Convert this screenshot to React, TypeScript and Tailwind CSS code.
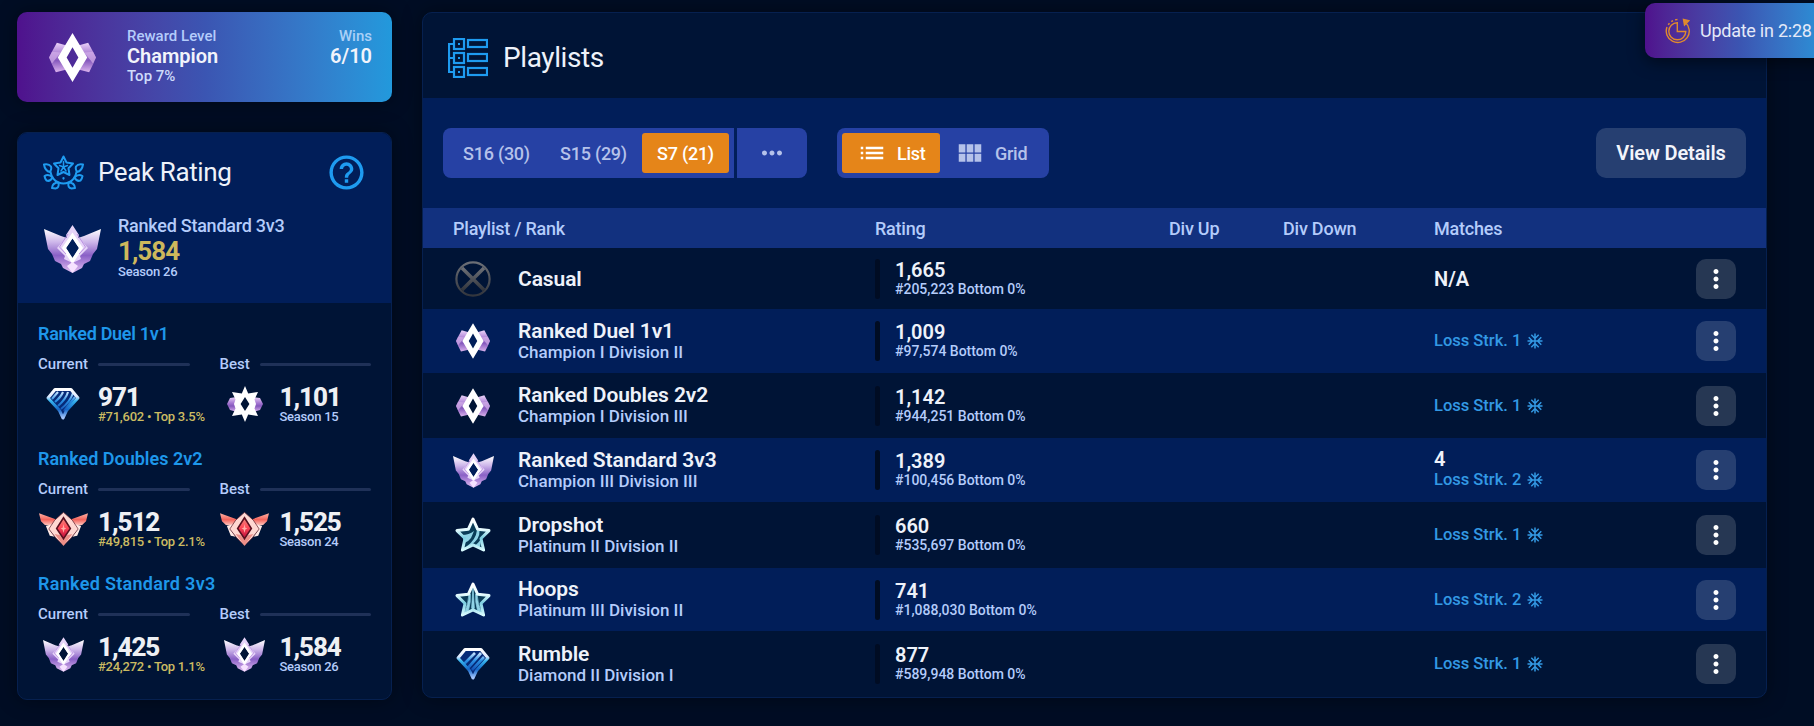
import React from "react";
import {
  MdAcUnit,
  MdHelpOutline,
  MdList,
  MdMoreHoriz,
  MdMoreVert,
  MdViewModule,
} from "react-icons/md";

type Rank = "casual" | "champ1" | "champ2" | "champ3" | "grand" | "plat2" | "plat3" | "dia2" | "dia3";

function Gradients() {
  return (
    <svg width="0" height="0" className="absolute" aria-hidden="true">
      <defs>
        <linearGradient id="purpleSide" x1="0" y1="0" x2="0" y2="1">
          <stop offset="0" stopColor="#ead2f8" />
          <stop offset="0.4" stopColor="#a678d2" />
          <stop offset="0.6" stopColor="#8558bd" />
          <stop offset="1" stopColor="#dcb4ee" />
        </linearGradient>
        <linearGradient id="purpleWing" x1="0" y1="0" x2="0" y2="1">
          <stop offset="0" stopColor="#ffffff" />
          <stop offset="0.3" stopColor="#cdb6ea" />
          <stop offset="0.6" stopColor="#8a60c6" />
          <stop offset="1" stopColor="#e4c0f4" />
        </linearGradient>
        <linearGradient id="redWing" x1="0" y1="0" x2="0" y2="1">
          <stop offset="0" stopColor="#ffb2a4" />
          <stop offset="0.5" stopColor="#f4645c" />
          <stop offset="1" stopColor="#ffd4cc" />
        </linearGradient>
        <linearGradient id="redCore" x1="0" y1="0" x2="0" y2="1">
          <stop offset="0" stopColor="#f08a80" />
          <stop offset="0.45" stopColor="#ff4a58" />
          <stop offset="1" stopColor="#b80838" />
        </linearGradient>
        <linearGradient id="gemEdge" x1="0" y1="0" x2="0" y2="1">
          <stop offset="0" stopColor="#ffffff" />
          <stop offset="0.25" stopColor="#dbe8ff" />
          <stop offset="0.4" stopColor="#35b4ee" />
          <stop offset="0.7" stopColor="#1668c8" />
          <stop offset="1" stopColor="#a8c8ff" />
        </linearGradient>
        <linearGradient id="gemStripe" x1="0" y1="0" x2="0" y2="1">
          <stop offset="0" stopColor="#c8e4ff" />
          <stop offset="0.45" stopColor="#2a90e4" />
          <stop offset="1" stopColor="#1450b4" />
        </linearGradient>
        <linearGradient id="starEdge" x1="0" y1="0" x2="0" y2="1">
          <stop offset="0" stopColor="#ffffff" />
          <stop offset="0.35" stopColor="#e4fbff" />
          <stop offset="0.6" stopColor="#7ccfe2" />
          <stop offset="1" stopColor="#d8fbff" />
        </linearGradient>
        <linearGradient id="casualRing" x1="0" y1="0" x2="0" y2="1">
          <stop offset="0" stopColor="#6c6f76" />
          <stop offset="1" stopColor="#33363d" />
        </linearGradient>
      </defs>
    </svg>
  );
}

function RankIcon({ rank, width, height }: { rank: Rank; width: number; height: number }) {
  const size = { width, height, className: "shrink-0 overflow-visible" };
  switch (rank) {
    case "casual":
      return (
        <svg {...size} viewBox="0 0 36 36" fill="none" stroke="url(#casualRing)">
          <circle cx="18" cy="18" r="16.6" strokeWidth="2.2" />
          <path d="M7 7 L29 29 M29 7 L7 29" strokeWidth="3.6" />
        </svg>
      );
    case "champ1":
      return (
        <svg {...size} viewBox="0 0 48 50">
          <path d="M8 10 L19 13 L13 25 L19 37 L7 40 L3 32 L0 25 L3 19Z" fill="url(#purpleSide)" />
          <path d="M40 10 L29 13 L35 25 L29 37 L41 40 L45 32 L48 25 L45 19Z" fill="url(#purpleSide)" />
          <path d="M3 19 L0 25 L3 31 L12 20Z M45 19 L48 25 L45 31 L36 20Z" fill="#d4b0ea" opacity="0.7" />
          <path fillRule="evenodd" d="M24 0 L39 25 L24 50 L9 25Z M24 14.5 L18 25 L24 35.5 L30 25Z" fill="#ffffff" />
        </svg>
      );
    case "champ2":
      return (
        <svg {...size} viewBox="0 0 36 36">
          <path d="M10 11 L3 12 L0 18 L3 24 L10 26 L13 18Z" fill="url(#purpleSide)" />
          <path d="M26 11 L33 12 L36 18 L33 24 L26 26 L23 18Z" fill="url(#purpleSide)" />
          <path
            fillRule="evenodd"
            d="M18 0 L21.2 7.5 L31 6 L27.5 13.5 L29 18 L27.5 22.5 L31 30 L21.2 28.5 L18 36 L14.8 28.5 L5 30 L8.5 22.5 L7 18 L8.5 13.5 L5 6 L14.8 7.5Z M18 11 L13.6 18 L18 25 L22.4 18Z"
            fill="#ffffff"
          />
        </svg>
      );
    case "champ3":
      return (
        <svg {...size} viewBox="0 0 57 48">
          <path d="M0 4 L17 11 L23 13 L18 24 L28.5 33 L28.5 48 L19 43 L17 39 L11 36 L8 29 L4 24Z" fill="url(#purpleWing)" />
          <path d="M57 4 L40 11 L34 13 L39 24 L28.5 33 L28.5 48 L38 43 L40 39 L46 36 L49 29 L53 24Z" fill="url(#purpleWing)" />
          <path
            fillRule="evenodd"
            d="M28.5 0 L35 10 L34 12 L44 23 L36 31 L37 34 L28.5 38 L20 34 L21 31 L13 23 L23 12 L22 10Z M28.5 13 L22 23 L28.5 33.5 L35 23Z"
            fill="#e6d4f8"
          />
          <path d="M28.5 10.5 L20 23 L28.5 36 L37 23Z" fill="none" stroke="#ffffff" strokeWidth="3.4" />
          <path d="M24 9 L15.5 22 L22 29 M33 9 L41.5 22 L35 29" fill="none" stroke="#b78be0" strokeWidth="0.9" />
          <path d="M23 41 L28.5 37 L34 41 L28.5 48Z" fill="#f6e2ff" />
        </svg>
      );
    case "grand":
      return (
        <svg {...size} viewBox="0 0 50 34">
          <path d="M0 1 L17 7 L13 14 L6 13 L2 9Z M50 1 L33 7 L37 14 L44 13 L48 9Z" fill="url(#redWing)" />
          <path d="M7 14 L14 12 L11 18 L16 25 L11 24Z M43 14 L36 12 L39 18 L34 25 L39 24Z" fill="#ffe9e4" />
          <path d="M25 0 L34 8 L40 17 L33 26 L25 34 L17 26 L10 17 L16 8Z" fill="#ffd8d2" />
          <path d="M25 0 L34 8 L40 17 L33 26 L25 34 L17 26 L10 17 L16 8Z" fill="none" stroke="#5c1a28" strokeWidth="0.7" />
          <path d="M16 22 L25 34 L34 22 L29 23 L25 28 L21 23Z" fill="#ee8f88" />
          <path d="M25 5.5 L32 16.5 L25 27 L18 16.5Z" fill="url(#redCore)" stroke="#5a1020" strokeWidth="1.6" />
          <path d="M25 12 L25.9 15.6 L28 16.5 L25.9 17.4 L25 21 L24.1 17.4 L22 16.5 L24.1 15.6Z" fill="#ffaaa4" />
        </svg>
      );
    case "dia2":
    case "dia3":
      return (
        <svg {...size} viewBox="0 0 34 32">
          <path d="M9 1.5 H25 L32 10 L20.5 23.5 L17 30.5 L13.5 23.5 L2 10Z" fill="#052a78" />
          {rank === "dia3" ? (
            <path
              d="M12 4 L6 11 M17 4 Q15 9 9 14 M22 4 Q20 11 12 18 M27 5 Q24 14 15 21 M29 9 L18 23"
              fill="none"
              stroke="url(#gemStripe)"
              strokeWidth="2.1"
            />
          ) : (
            <path d="M19 5 L8 16 M25 5 L12 20 M28 9 L16 22" fill="none" stroke="url(#gemStripe)" strokeWidth="2.7" />
          )}
          <path
            d="M9 1.5 H25 L32 10 L20.5 22.5 L17 30 L13.5 22.5 L2 10Z"
            fill="none"
            stroke="url(#gemEdge)"
            strokeWidth="3"
            strokeLinejoin="round"
          />
        </svg>
      );
    default:
      return (
        <svg {...size} viewBox="0 0 36 36">
          <path
            d="M18 2 L22.7 12.3 L34 13.6 L26 21.5 L28.6 33 L18 27.8 L7.4 33 L10 21.5 L2 13.6 L13.3 12.3Z"
            fill="#0a3c58"
          />
          {rank === "plat3" ? (
            <path
              d="M18 5 L16.6 26 L18 28 L19.4 26Z M14 12 Q13.5 22 9 31 L13.5 28.5 Q16 20 15.4 12Z M22 12 Q22.5 22 27 31 L22.5 28.5 Q20 20 20.6 12Z"
              fill="#8fd3e6"
              stroke="#8fd3e6"
              strokeWidth="0.7"
            />
          ) : (
            <path
              d="M7 18 Q14 18 19 14 L16 21 Q13 25 9.5 26Z M22 13 Q21 23 11 30 L16 28 Q25 22 24.5 14Z M27 18 Q26 24 20 28.5 L25 30Z"
              fill="#8fd3e6"
            />
          )}
          <path
            d="M18 2 L22.7 12.3 L34 13.6 L26 21.5 L28.6 33 L18 27.8 L7.4 33 L10 21.5 L2 13.6 L13.3 12.3Z"
            fill="none"
            stroke="url(#starEdge)"
            strokeWidth="3"
            strokeLinejoin="round"
          />
        </svg>
      );
  }
}

function LaurelIcon() {
  return (
    <svg width="41" height="35" viewBox="0 0 41 35" fill="none" stroke="#1e9bf0" strokeWidth="2" strokeLinejoin="round" strokeLinecap="round" className="shrink-0">
      <path d="M20.5 1.5 L23.5 7.5 L30 8.5 L25.5 13.3 L26.5 20 L20.5 17 L14.5 20 L15.5 13.3 L11 8.5 L17.5 7.5Z" />
      <path d="M20.5 6.5 V10.5 M20.5 12 L24.5 10.5 M20.5 12 L16.5 10.5 M20.5 12 L23 16 M20.5 12 L18 16" strokeWidth="1.5" />
      <path d="M1 9.5 Q6 8.5 8 11.5 Q8.8 14.5 7 17 Q2 16 1 9.5Z M40 9.5 Q35 8.5 33 11.5 Q32.2 14.5 34 17 Q39 16 40 9.5Z" />
      <path d="M1.5 21 Q6 18.5 9.5 22.5 Q7 27 3.5 25.5 Q2 24 1.5 21Z M39.5 21 Q35 18.5 31.5 22.5 Q34 27 37.5 25.5 Q39 24 39.5 21Z" />
      <path d="M9 33 Q9.5 27.5 15.5 27.5 Q16.5 33 12.5 33.5Z M32 33 Q31.5 27.5 25.5 27.5 Q24.5 33 28.5 33.5Z" />
      <path d="M7.5 17 Q9 25 15.5 27.5 Q20.5 29.5 25.5 27.5 Q32 25 33.5 17" />
      <path d="M20.5 23 V23.6" strokeWidth="2.2" />
    </svg>
  );
}

function PlaylistsIcon() {
  return (
    <svg width="40" height="40" viewBox="0 0 40 40" fill="none" stroke="#1e9bf0" strokeWidth="2.2" className="shrink-0">
      <path d="M6 6 H1 V34 H6 M1 20 H6" />
      {[1, 15, 29].map((y) => (
        <g key={y}>
          <rect x="6" y={y} width="10" height="10" />
          <rect x="10" y={y + 4} width="2" height="2" fill="#1e9bf0" stroke="none" />
          <rect x="20" y={y + 1} width="19" height="7" />
        </g>
      ))}
    </svg>
  );
}

function UpdateIcon() {
  return (
    <svg width="25" height="26" viewBox="0 0 25 26" fill="none" stroke="#e08a2e" strokeWidth="1.4" className="shrink-0">
      <path d="M20.5 4.5 A11.5 11.5 0 1 1 2 9" />
      <path d="M3.2 6.8 L4.5 5.2 M6.3 3.6 L8 2.6 M10 1.9 L12.5 1.5" />
      <path d="M12.3 4.8 V13.5 H20.8 A8.5 8.5 0 1 1 12.3 4.8Z" />
      <path d="M18.5 1.5 L23.8 2.8 L19.5 7Z" fill="#e08a2e" />
    </svg>
  );
}

interface Entry {
  rank: Rank;
  w: number;
  h: number;
  value: string;
  note: string;
}

const peaks: { title: string; titleStyle: string; current: Entry; best: Entry }[] = [
  {
    title: "Ranked Duel 1v1",
    titleStyle: "tracking-[-0.3px]",
    current: { rank: "dia3", w: 34, h: 32, value: "971", note: "#71,602 • Top 3.5%" },
    best: { rank: "champ2", w: 36, h: 36, value: "1,101", note: "Season 15" },
  },
  {
    title: "Ranked Doubles 2v2",
    titleStyle: "tracking-normal",
    current: { rank: "grand", w: 49, h: 34, value: "1,512", note: "#49,815 • Top 2.1%" },
    best: { rank: "grand", w: 49, h: 34, value: "1,525", note: "Season 24" },
  },
  {
    title: "Ranked Standard 3v3",
    titleStyle: "tracking-[0.3px]",
    current: { rank: "champ3", w: 41, h: 35, value: "1,425", note: "#24,272 • Top 1.1%" },
    best: { rank: "champ3", w: 41, h: 35, value: "1,584", note: "Season 26" },
  },
];

function PeakEntry({ label, entry, gold }: { label: string; entry: Entry; gold?: boolean }) {
  return (
    <div className="min-w-0">
      <div className="flex h-5 items-center gap-2.5 text-[15px] font-medium text-[#b4ccfb]">
        <span>{label}</span>
        <span className="h-[3px] flex-1 rounded bg-[#1f3158]" />
      </div>
      <div className="mt-[10px] flex h-10 items-center">
        <div className="flex w-[50px] shrink-0 justify-center">
          <RankIcon rank={entry.rank} width={entry.w} height={entry.h} />
        </div>
        <div className="ml-[10px] whitespace-nowrap">
          <div className="text-[26px] leading-[26px] font-extrabold tracking-[-1.1px] text-[#eef0f4]">{entry.value}</div>
          <div
            className={
              gold
                ? "text-[13px] leading-[14px] font-medium tracking-[-0.25px] text-[#cbbb62]"
                : "text-[13px] leading-[14px] font-medium tracking-[-0.25px] text-[#b4ccfb]"
            }
          >
            {entry.note}
          </div>
        </div>
      </div>
    </div>
  );
}

interface Row {
  name: string;
  tier?: string;
  rank: Rank;
  w: number;
  h: number;
  rating: string;
  place: string;
  matches?: string;
  streak?: string;
  style: string;
}

const rows: Row[] = [
  { name: "Casual", rank: "casual", w: 36, h: 36, rating: "1,665", place: "#205,223 Bottom 0%", matches: "N/A", style: "h-[61px]" },
  { name: "Ranked Duel 1v1", tier: "Champion I Division II", rank: "champ1", w: 34, h: 36, rating: "1,009", place: "#97,574 Bottom 0%", streak: "Loss Strk. 1", style: "h-[64px] bg-[#011e59]" },
  { name: "Ranked Doubles 2v2", tier: "Champion I Division III", rank: "champ1", w: 34, h: 36, rating: "1,142", place: "#944,251 Bottom 0%", streak: "Loss Strk. 1", style: "h-[65px]" },
  { name: "Ranked Standard 3v3", tier: "Champion III Division III", rank: "champ3", w: 41, h: 35, rating: "1,389", place: "#100,456 Bottom 0%", matches: "4", streak: "Loss Strk. 2", style: "h-[64px] bg-[#011e59]" },
  { name: "Dropshot", tier: "Platinum II Division II", rank: "plat2", w: 36, h: 36, rating: "660", place: "#535,697 Bottom 0%", streak: "Loss Strk. 1", style: "h-[66px]" },
  { name: "Hoops", tier: "Platinum III Division II", rank: "plat3", w: 36, h: 36, rating: "741", place: "#1,088,030 Bottom 0%", streak: "Loss Strk. 2", style: "h-[63px] bg-[#011e59]" },
  { name: "Rumble", tier: "Diamond II Division I", rank: "dia2", w: 34, h: 32, rating: "877", place: "#589,948 Bottom 0%", streak: "Loss Strk. 1", style: "h-[66px]" },
];

const columns = "grid grid-cols-[65px_357px_294px_114px_151px_262px_1fr] pl-[30px]";

export default function App() {
  return (
    <div className="relative flex h-[726px] w-full items-start overflow-hidden bg-[#000d24] pt-3 pl-[17px] font-[Roboto,'Liberation_Sans',sans-serif] text-[#eef2fa]">
      <Gradients />

      <aside className="flex w-[375px] shrink-0 flex-col gap-[30px]">
        <section className="flex h-[90px] rounded-[10px] bg-linear-to-r from-[#4f118d] via-[#3b55b2] to-[#2299dc] pt-[14px] pr-5 pl-8 shadow-[0_0_20px_rgba(0,0,0,0.4)]">
          <div className="mt-[7px]">
            <RankIcon rank="champ1" width={47} height={49} />
          </div>
          <div className="ml-[31px] text-[15px] leading-5 font-medium text-[#b4ccfb]">
            <div>Reward Level</div>
            <div className="text-[20px] font-semibold text-[#f2f4fb]">Champion</div>
            <div className="text-[#cfdcfb]">Top 7%</div>
          </div>
          <div className="ml-auto text-right text-[15px] leading-5 font-medium text-[#a9d0f7]">
            <div>Wins</div>
            <div className="text-[20px] font-semibold text-[#f2f4fb]">6/10</div>
          </div>
        </section>

        <section className="h-[568px] overflow-hidden rounded-[10px] border border-[#06204f] bg-[#001436] shadow-[0_0_20px_rgba(0,0,0,0.4)]">
          <div className="h-[170px] bg-[#011e59] pt-[19px] pr-[24px] pl-[25px]">
            <div className="flex h-[41px] items-center">
              <LaurelIcon />
              <h2 className="ml-[14px] text-[26px] tracking-[-0.4px]">Peak Rating</h2>
              <MdHelpOutline size={41} color="#1e9bf0" className="ml-auto" />
            </div>
            <div className="mt-[22px] flex items-center">
              <div className="mt-1 ml-px">
                <RankIcon rank="champ3" width={57} height={48} />
              </div>
              <div className="ml-[17px] font-medium text-[#b4ccfb]">
                <div className="text-[18px] leading-[22px] tracking-[-0.25px]">Ranked Standard 3v3</div>
                <div className="text-[26px] leading-[28px] font-bold tracking-[-1px] text-[#cdb85c]">1,584</div>
                <div className="text-[13px] leading-[14px] tracking-[-0.2px]">Season 26</div>
              </div>
            </div>
          </div>
          <div className="flex flex-col gap-[23px] px-5 pt-[19px]">
            {peaks.map((p) => (
              <div key={p.title}>
                <h3 className={`text-[18px] leading-6 font-semibold text-[#1e97ea] ${p.titleStyle}`}>{p.title}</h3>
                <div className="mt-2 grid grid-cols-2 gap-[30px]">
                  <PeakEntry label="Current" entry={p.current} gold />
                  <PeakEntry label="Best" entry={p.best} />
                </div>
              </div>
            ))}
          </div>
        </section>
      </aside>

      <main className="ml-[30px] h-[686px] w-[1345px] shrink-0 overflow-hidden rounded-[10px] border border-[#06204f] bg-[#001436] shadow-[0_0_20px_rgba(0,0,0,0.4)]">
        <header className="flex h-[85px] items-center gap-[15px] pt-[5px] pl-[25px]">
          <PlaylistsIcon />
          <h1 className="text-[28px] leading-[40px] tracking-[-0.4px]">Playlists</h1>
        </header>

        <div className="flex h-[110px] items-center bg-[#011e59] px-5 text-[18px] font-medium tracking-[-0.25px] text-[#b5c2ea]">
          <div className="flex h-[50px] items-center rounded-l-lg bg-[#2641a4] px-[5px]">
            <button className="h-10 w-[97px]">S16 (30)</button>
            <button className="h-10 w-[97px]">S15 (29)</button>
            <button className="h-10 w-[87px] rounded-[3px] bg-[#e58519] text-white">S7 (21)</button>
          </div>
          <button className="ml-[3px] flex h-[50px] w-[70px] items-center justify-center rounded-r-lg bg-[#2641a4]">
            <MdMoreHoriz size={30} />
          </button>
          <div className="ml-[30px] flex h-[50px] w-[212px] items-center rounded-lg bg-[#2641a4] px-[5px]">
            <button className="flex h-10 w-[98px] items-center gap-[10px] rounded-[3px] bg-[#e58519] pl-[15px] text-white">
              <MdList size={30} />
              List
            </button>
            <button className="flex h-10 items-center gap-[10px] pl-[15px]">
              <MdViewModule size={30} />
              Grid
            </button>
          </div>
          <button className="ml-auto h-[50px] w-[150px] rounded-[10px] bg-white/15 text-[20px] font-semibold tracking-[-0.1px] text-[#f2f4fb]">
            View Details
          </button>
        </div>

        <div className={`${columns} h-10 items-center bg-[#12317f] text-[18px] font-medium tracking-[-0.22px] text-[#b4ccfb]`}>
          <span className="col-span-2">Playlist / Rank</span>
          <span>Rating</span>
          <span>Div Up</span>
          <span>Div Down</span>
          <span>Matches</span>
        </div>

        {rows.map((r) => (
          <div key={r.name} className={`${columns} ${r.style} items-center font-medium`}>
            <div className="flex w-10 justify-center">
              <RankIcon rank={r.rank} width={r.w} height={r.h} />
            </div>
            <div>
              <div className="text-[21px] leading-[22px] font-semibold tracking-[-0.1px]">{r.name}</div>
              {r.tier && <div className="text-[17px] leading-[21px] text-[#b4ccfb]">{r.tier}</div>}
            </div>
            <div className="flex items-center gap-[15px]">
              <span className="h-10 w-[5px] rounded-full bg-[#000c23]" />
              <div>
                <div className="text-[20px] leading-[20px] font-semibold">{r.rating}</div>
                <div className="text-[14px] leading-[18px] text-[#b4ccfb]">{r.place}</div>
              </div>
            </div>
            <span />
            <span />
            <div>
              {r.matches && <div className="text-[20px] leading-[20px] font-semibold">{r.matches}</div>}
              {r.streak && (
                <div className="flex items-center gap-[5px] text-[16.5px] leading-[22px] font-medium text-[#3399e4]">
                  {r.streak}
                  <MdAcUnit size={18} />
                </div>
              )}
            </div>
            <button className="flex size-10 items-center justify-center rounded-[10px] bg-white/15 text-white">
              <MdMoreVert size={30} />
            </button>
          </div>
        ))}
      </main>

      <div className="absolute top-[3px] left-[1645px] flex h-[55px] w-[190px] items-center rounded-l-[10px] bg-linear-to-r from-[#4f118d] via-[#3b55b2] to-[#2299dc] pl-5 shadow-[0_4px_16px_rgba(0,0,0,0.5)]">
        <UpdateIcon />
        <span className="ml-[10px] text-[18px] tracking-[-0.25px] whitespace-nowrap text-[#e4e9f8]">Update in 2:28</span>
      </div>
    </div>
  );
}
